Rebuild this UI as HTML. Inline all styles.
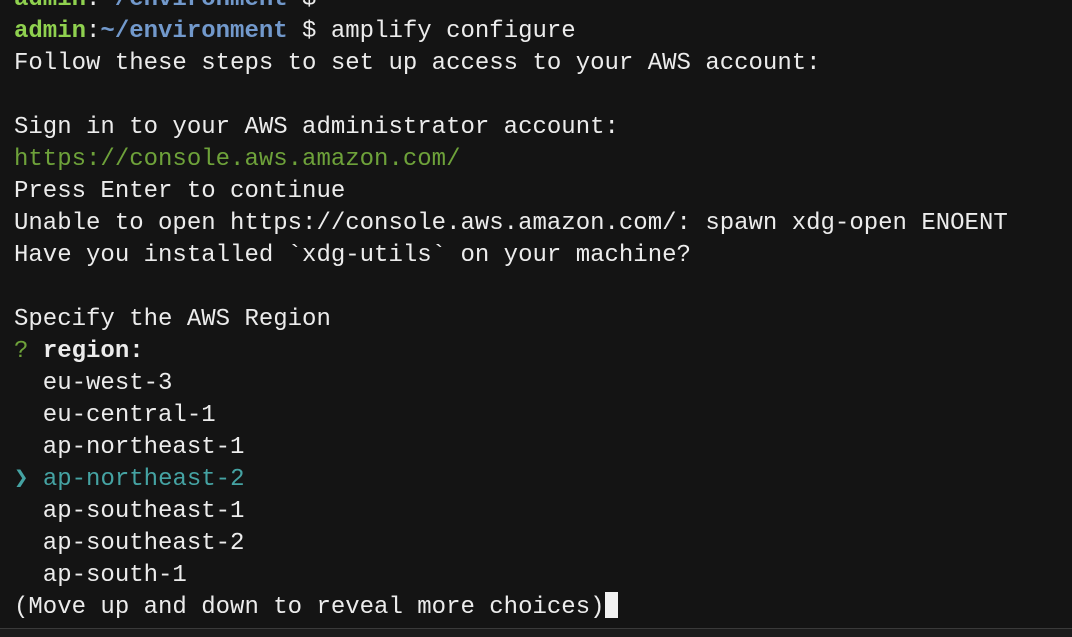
<!DOCTYPE html>
<html><head><style>
html,body{margin:0;padding:0;background:#141414;width:1072px;height:636px;overflow:hidden}
pre{margin:0;position:absolute;left:14px;top:-16px;font-family:"Liberation Mono","DejaVu Sans Mono",monospace;font-size:24px;line-height:32px;color:#ececec}
.g{color:#8fd14f;font-weight:bold}.b{color:#7299cc;font-weight:bold}
.u{color:#6ea23a}.c{color:#45a3a3}.q{color:#6ea23a}
.cur{display:inline-block;width:13px;height:26px;background:#f2f2f2;vertical-align:-5px}
.bar{position:absolute;left:0;right:0;top:628px;height:8px;background:#1c1c1c;border-top:1px solid #3a3a3a}
</style></head><body>
<pre><span class="g">admin</span>:<span class="b">~/environment</span> $
<span class="g">admin</span>:<span class="b">~/environment</span> $ amplify configure
Follow these steps to set up access to your AWS account:

Sign in to your AWS administrator account:
<span class="u">https://console.aws.amazon.com/</span>
Press Enter to continue
Unable to open https://console.aws.amazon.com/: spawn xdg-open ENOENT
Have you installed `xdg-utils` on your machine?

Specify the AWS Region
<span class="q">?</span> <b>region:</b>
  eu-west-3
  eu-central-1
  ap-northeast-1
<span class="c">❯ ap-northeast-2</span>
  ap-southeast-1
  ap-southeast-2
  ap-south-1
(Move up and down to reveal more choices)<span class="cur"></span></pre>
<div class="bar"></div>
</body></html>
